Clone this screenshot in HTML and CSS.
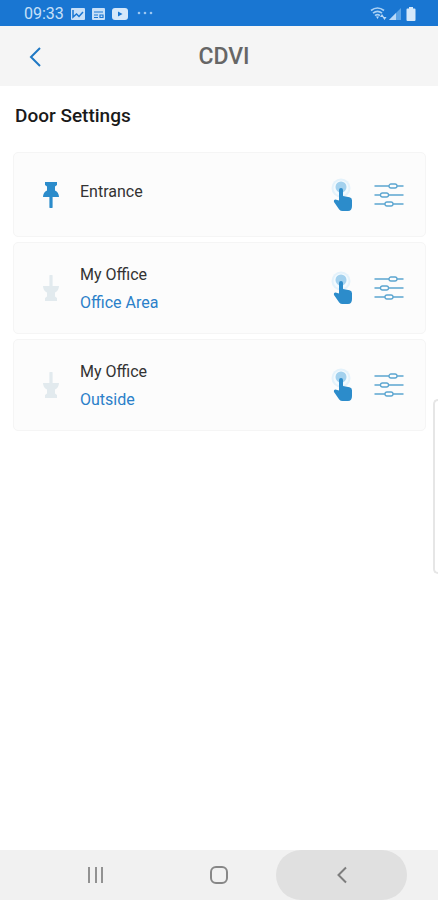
FILE: index.html
```html
<!DOCTYPE html>
<html lang="en">
<head>
<meta charset="utf-8">
<meta name="viewport" content="width=device-width, initial-scale=1">
<title>CDVI</title>
<link rel="stylesheet" href="styles.css">
</head>
<body>
<svg class="defs" aria-hidden="true">
  <symbol id="pin" viewBox="0 0 16 26">
    <path d="M2 0h12v3l-2 1.500v4c2.500 1.200 4 3.500 4 6.500H9.600v10a1.600 1.600 0 0 1-3.200 0V15H0c0-3 1.500-5.300 4-6.500v-4L2 3z"/>
  </symbol>
  <symbol id="touch" viewBox="0 0 24 34">
    <circle cx="11" cy="10" r="9.500" fill="#e4f2fb"/>
    <circle cx="11" cy="10" r="7.500" fill="#f3fafe"/>
    <circle cx="11" cy="9" r="5.500" fill="#a3d1ee"/>
    <path fill="#2c8ccb" d="M9 12a2 2 0 0 1 4 0v6l6.500 1.200q2.500.6 2.500 3V28q0 5-4 5h-5.500q-2 0-3.300-1.500L4 24q-.6-2.500 1.500-2.500L9 22.500z"/>
  </symbol>
  <symbol id="sliders" viewBox="0 0 30 26">
    <g fill="none" stroke="#5ba5d0" stroke-width="1.300">
      <path d="M.5 4H15M23 4h6.500M.5 13H6.500M14.500 13h15M.5 22H11M19 22h10.500"/>
      <rect x="15" y="2" width="8" height="4" rx="2"/>
      <rect x="6.500" y="11" width="8" height="4" rx="2"/>
      <rect x="11" y="20" width="8" height="4" rx="2"/>
    </g>
  </symbol>
</svg>

<div class="status">
  <span class="time">09:33</span>
  <svg width="14" height="12" viewBox="0 0 14 12"><rect width="14" height="12" rx="1" fill="#c7e0f8"/><path d="M2 2v7l3.500-3L8 8.500 12 4" fill="none" stroke="#1976d2" stroke-width="1.500"/></svg>
  <svg width="13" height="12" viewBox="0 0 13 12"><rect width="13" height="12" rx="1" fill="#c7e0f8"/><path d="M2 4h9M2 7h4M2 9.500h4M8 7h3v2.500H8z" fill="none" stroke="#1976d2" stroke-width="1.200"/></svg>
  <svg width="16" height="12" viewBox="0 0 16 12"><rect width="16" height="12" rx="3" fill="#d5e8fa"/><path d="M6 3.500v5L10.500 6z" fill="#1976d2"/></svg>
  <svg class="more" width="16" height="12" viewBox="0 0 16 12" fill="#9cc7f1"><circle cx="2" cy="5" r="1.300"/><circle cx="8" cy="5" r="1.300"/><circle cx="14" cy="5" r="1.300"/></svg>
  <span class="signals">
    <svg width="18" height="16" viewBox="0 0 18 16"><g fill="none" stroke="#a9d0f4" stroke-width="1.700"><path d="M1 4.500q6.500-5 13 0M3 7.200q4.500-3.500 9 0M5 9.700q2.500-2 5 0"/></g><path d="M6 10.500h3L7.500 13z M12 8l2 3h-4zM14.500 14l-2-3h4z" fill="#b9d9f7"/></svg>
    <svg width="12" height="14" viewBox="0 0 12 14"><path d="M0 13 12 1v12z" fill="#5ba3e6"/><path d="M0 13l7-7v7z" fill="#b9d9f7"/></svg>
    <svg width="10" height="14" viewBox="0 0 10 14"><path d="M3 0h4v1.500h1.500q1 0 1 1V13q0 1-1 1h-7q-1 0-1-1V2.500q0-1 1-1H3z" fill="#d5e8fa"/></svg>
  </span>
</div>

<header class="bar">
  <button class="back" aria-label="Back"><svg width="12" height="20" viewBox="0 0 12 20"><path d="M11 1 2 10l9 9" fill="none" stroke="#1f78c4" stroke-width="2"/></svg></button>
  <h1>CDVI</h1>
</header>

<main>
  <h2>Door Settings</h2>
  <ul class="doors">
    <li class="door single">
      <button class="pin" aria-label="Unpin Entrance"><svg width="16" height="26"><use href="#pin"/></svg></button>
      <div class="label"><span>Entrance</span></div>
      <button class="touch" aria-label="Open Entrance"><svg width="24" height="34"><use href="#touch"/></svg></button>
      <button aria-label="Entrance settings"><svg width="30" height="26"><use href="#sliders"/></svg></button>
    </li>
    <li class="door">
      <button class="pin off" aria-label="Pin My Office, Office Area"><svg width="16" height="26"><use href="#pin"/></svg></button>
      <div class="label"><span>My Office</span><span class="area">Office Area</span></div>
      <button class="touch" aria-label="Open My Office, Office Area"><svg width="24" height="34"><use href="#touch"/></svg></button>
      <button aria-label="My Office, Office Area settings"><svg width="30" height="26"><use href="#sliders"/></svg></button>
    </li>
    <li class="door">
      <button class="pin off" aria-label="Pin My Office, Outside"><svg width="16" height="26"><use href="#pin"/></svg></button>
      <div class="label"><span>My Office</span><span class="area">Outside</span></div>
      <button class="touch" aria-label="Open My Office, Outside"><svg width="24" height="34"><use href="#touch"/></svg></button>
      <button aria-label="My Office, Outside settings"><svg width="30" height="26"><use href="#sliders"/></svg></button>
    </li>
  </ul>
</main>

<div class="edge"></div>

<nav class="nav">
  <button aria-label="Recent apps"><svg width="18" height="18" viewBox="0 0 18 18"><path d="M2 1v16M9 1v16M15 1v16" stroke="#929292" stroke-width="2"/></svg></button>
  <button aria-label="Home"><svg width="18" height="18" viewBox="0 0 18 18"><rect x="1" y="1" width="16" height="16" rx="5" fill="none" stroke="#878787" stroke-width="2"/></svg></button>
  <button class="pressed" aria-label="Back"><svg width="10" height="18" viewBox="0 0 10 18"><path d="M9 1.500 1.500 9 9 16.500" fill="none" stroke="#7d7d7d" stroke-width="2"/></svg></button>
</nav>
</body>
</html>
```
FILE: styles.css
```css
* {
  box-sizing: border-box;
}

body {
  margin: 0;
  min-height: 100vh;
  display: flex;
  flex-direction: column;
  background: #fff;
  color: #333;
  font-family: Roboto, "Liberation Sans", sans-serif;
}

button {
  display: flex;
  align-items: center;
  justify-content: center;
  margin: 0;
  padding: 0;
  border: 0;
  background: none;
}

svg {
  display: block;
}

.defs {
  position: absolute;
  width: 0;
  height: 0;
}

.status {
  display: flex;
  align-items: center;
  gap: 7px;
  height: 26px;
  padding: 2px 22px 0 24px;
  background: #1976d2;
  color: #c7e0f8;
}

.time {
  font-size: 16px;
  line-height: 24px;
}

.more {
  margin-left: 2px;
}

.signals {
  display: flex;
  align-items: center;
  gap: 5px;
  margin-left: auto;
}

.signals svg:first-child {
  margin-right: -4px;
}

.bar {
  display: grid;
  grid-template-columns: 40px 1fr 30px;
  align-items: center;
  height: 60px;
  padding: 2px 15px 0;
  background: #f5f5f5;
}

.back {
  height: 40px;
}

h1 {
  margin: 0;
  color: #666;
  font-size: 23px;
  font-weight: 500;
  line-height: 28px;
  text-align: center;
}

main {
  flex: 1;
  padding: 18px 12px 18px 13px;
}

h2 {
  margin: 0 2px 24px;
  color: #1a1a1a;
  font-size: 19px;
  font-weight: 500;
  line-height: 24px;
}

.doors {
  display: grid;
  gap: 5px;
  margin: 0;
  padding: 0;
  list-style: none;
}

.door {
  display: flex;
  align-items: center;
  min-height: 92px;
  padding: 0 21px 0 29px;
  border: 1px solid #f5f5f5;
  border-radius: 5px;
  background: #fcfcfc;
}

.single {
  min-height: 85px;
}

.pin {
  color: #2c8ccb;
  fill: currentColor;
}

.off {
  color: #e2eaee;
}

.off svg {
  transform: rotate(180deg);
}

.label {
  flex: 1;
  display: grid;
  gap: 4px;
  padding: 2px 0 0 21px;
  font-size: 16px;
  line-height: 24px;
}

.single .label {
  padding: 0 0 6px 21px;
}

.area {
  color: #2b80c9;
}

.touch {
  margin-right: 20px;
}

.edge {
  position: absolute;
  top: 399px;
  right: 0;
  width: 5px;
  height: 175px;
  border: 2px solid #e6e6e6;
  border-right: 0;
  border-radius: 5px 0 0 5px;
}

.nav {
  display: grid;
  grid-template-columns: repeat(3, 1fr);
  height: 50px;
  padding: 0 35px;
  background: #f1f1f1;
}

.pressed {
  margin: 0 -4px;
  border-radius: 25px;
  background: #e0e0e0;
}
```
